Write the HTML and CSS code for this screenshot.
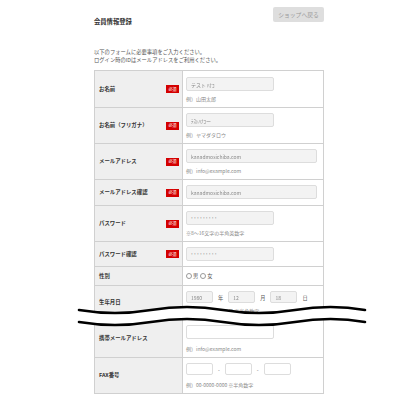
FILE: index.html
```html
<!DOCTYPE html>
<html lang="ja">
<head>
    <meta charset="UTF-8">
    <meta name="viewport" content="width=device-width, initial-scale=1.0">
    <title>会員情報登録</title>
    <link rel="stylesheet" href="styles.css">
</head>
<body>
    <div class="page">
        <div class="page-head">
            <h1 class="page-title">会員情報登録</h1>
            <a class="back-btn">ショップへ戻る</a>
        </div>
        <p class="intro">以下のフォームに必要事項をご入力ください。<br>ログイン時のIDはメールアドレスをご利用ください。</p>

        <table class="form-table">
            <colgroup><col class="col-label"><col></colgroup>
            <tr class="row-first">
                <th><div class="label-wrap"><span>お名前</span><span class="req">必須</span></div></th>
                <td><div class="field filled w-md"><span class="blur">テスト ﾊﾅｺ</span></div><p class="hint">例）山田太郎</p></td>
            </tr>
            <tr>
                <th><div class="label-wrap"><span>お名前（フリガナ）</span><span class="req">必須</span></div></th>
                <td><div class="field filled w-md"><span class="blur">ﾃｽﾄﾊﾅｺー</span></div><p class="hint">例）ヤマダタロウ</p></td>
            </tr>
            <tr>
                <th><div class="label-wrap"><span>メールアドレス</span><span class="req">必須</span></div></th>
                <td><div class="field filled w-lg"><span class="blur">kanadmosichiba.com</span></div><p class="hint">例）info@example.com</p></td>
            </tr>
            <tr class="row-loose">
                <th><div class="label-wrap"><span>メールアドレス確認</span><span class="req">必須</span></div></th>
                <td><div class="field filled w-lg"><span class="blur">kanadmosichiba.com</span></div></td>
            </tr>
            <tr>
                <th><div class="label-wrap"><span>パスワード</span><span class="req">必須</span></div></th>
                <td><div class="field filled w-md"><span class="dots">•••••••••</span></div><p class="hint">※8～16文字の半角英数字</p></td>
            </tr>
            <tr>
                <th><div class="label-wrap"><span>パスワード確認</span><span class="req">必須</span></div></th>
                <td><div class="field filled w-md"><span class="dots">•••••••••</span></div></td>
            </tr>
            <tr>
                <th><div class="label-wrap"><span>性別</span></div></th>
                <td><div class="radios"><span class="radio"></span>男<span class="radio"></span>女</div></td>
            </tr>
            <tr>
                <th><div class="label-wrap"><span>生年月日</span></div></th>
                <td>
                    <div class="date-row">
                        <div class="field filled w-sm"><span class="blur">1980</span></div><span>年</span>
                        <div class="field filled w-sm"><span class="blur">12</span></div><span>月</span>
                        <div class="field filled w-sm"><span class="blur">18</span></div><span>日</span>
                    </div>
                    <p class="hint">例）1980年01月01日 ※半角数字</p>
                </td>
            </tr>
            <tr>
                <th><div class="label-wrap"><span>携帯メールアドレス</span></div></th>
                <td><div class="field w-md"></div><p class="hint hint-wide">例）info@example.com</p></td>
            </tr>
            <tr>
                <th><div class="label-wrap"><span>FAX番号</span></div></th>
                <td>
                    <div class="date-row">
                        <div class="field w-sm"></div><span>-</span>
                        <div class="field w-sm"></div><span>-</span>
                        <div class="field w-sm"></div>
                    </div>
                    <p class="hint hint-wide">例）00-0000-0000 ※半角数字</p>
                </td>
            </tr>
        </table>

        <!-- page break mark over the form -->
        <svg class="cut-mark" width="290" height="30" viewBox="0 0 290 30">
            <path d="M2,15 Q38,21 74,15 T146,15 T218,15 T290,15" fill="none" stroke="#fff" stroke-width="11"/>
            <path d="M2,9 Q38,15 74,9 T146,9 T218,9 T288,9" fill="none" stroke="#000" stroke-width="2.6" stroke-linecap="round"/>
            <path d="M2,21 Q38,27 74,21 T146,21 T218,21 T288,21" fill="none" stroke="#000" stroke-width="2.6" stroke-linecap="round"/>
        </svg>
    </div>
</body>
</html>
```

FILE: styles.css
```css
body {
    margin: 0;
    padding: 0;
    background-color: #fff;
    color: #333;
    font-family: "Noto Sans CJK JP", "Noto Sans", sans-serif;
}

.page {
    position: relative;
    width: 230px;
    margin-left: 94px;
    padding-top: 7px;
}

.page-head {
    display: flex;
    justify-content: space-between;
    align-items: flex-start;
}

.page-title {
    margin: 11px 0 0;
    font-size: 6.3px;
    line-height: 8px;
    font-weight: bold;
    color: #333;
}

.back-btn {
    display: flex;
    align-items: center;
    justify-content: center;
    width: 51px;
    height: 15px;
    background-color: #dedede;
    border-radius: 2px;
    color: #999;
    font-size: 5.8px;
}

.intro {
    margin: 22px 0 6px;
    font-size: 5.3px;
    line-height: 8px;
    color: #555;
}

.form-table {
    width: 230px;
    table-layout: fixed;
    border-collapse: collapse;
    border: 1px solid #d0d0d0;
}

.col-label {
    width: 88px;
}

.form-table th,
.form-table td {
    border: 1px solid #d0d0d0;
    vertical-align: middle;
}

.form-table th {
    background-color: #efefef;
    padding: 0 3px 0 4px;
    text-align: left;
    font-size: 5.4px;
    line-height: 7px;
    font-weight: bold;
    color: #333;
}

.form-table td {
    padding: 5px 3px;
    background-color: #fff;
    line-height: 7px;
}

.form-table .row-first td {
    padding-top: 6px;
}

.form-table .row-loose td {
    padding-bottom: 6px;
}

.label-wrap {
    display: flex;
    justify-content: space-between;
    align-items: center;
}

.req {
    display: flex;
    align-items: center;
    justify-content: center;
    width: 13px;
    height: 8px;
    background-color: #d40000;
    color: #fff;
    font-size: 4px;
    font-weight: normal;
}

.field {
    box-sizing: border-box;
    height: 14px;
    border: 1px solid #ddd;
    border-radius: 2px;
    background-color: #fff;
    display: flex;
    align-items: center;
    padding-left: 4px;
    font-size: 5px;
    color: #888;
}

.filled {
    background-color: #f3f3f3;
}

.w-md { width: 88px; }
.w-lg { width: 131px; }
.w-sm { width: 27px; height: 12px; }

.blur {
    filter: blur(0.4px);
    white-space: nowrap;
}

.dots {
    letter-spacing: 1.2px;
    color: #666;
    font-size: 3px;
    font-family: "DejaVu Sans", sans-serif;
}

.hint {
    margin: 4px 0 0;
    font-size: 5px;
    line-height: 7px;
    color: #888;
}

.hint-wide {
    margin-top: 6px;
}

.radios {
    display: flex;
    align-items: center;
    font-size: 5.2px;
    line-height: 8px;
    color: #555;
}

.radio {
    width: 4px;
    height: 4px;
    border: 1px solid #999;
    border-radius: 50%;
    margin-right: 1px;
}

.radios .radio:nth-child(2) {
    margin-left: 2px;
}

.date-row {
    display: flex;
    align-items: center;
    gap: 5px;
    font-size: 5.2px;
    color: #555;
}

.cut-mark {
    position: absolute;
    left: -17px;
    top: 301px;
}
```
